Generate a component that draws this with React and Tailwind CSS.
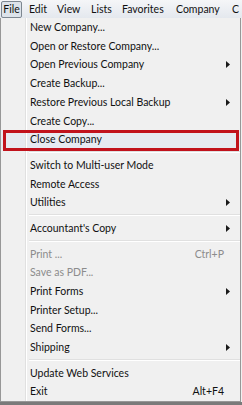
import React from 'react';

// menu bar entries after "File": [label, width of the slot]
const menus = [
  ['Edit', 'w-[28px]'],
  ['View', 'w-[34px]'],
  ['Lists', 'w-[31px]'],
  ['Favorites', 'w-[54px]'],
  ['Company', 'w-[56px]'],
  ['C', 'w-[10px]'],
];

// items of the File menu, 'sep' = separator line
const items = [
  { label: 'New Company...' },
  { label: 'Open or Restore Company...' },
  { label: 'Open Previous Company', sub: true },
  { label: 'Create Backup...' },
  { label: 'Restore Previous Local Backup', sub: true },
  { label: 'Create Copy...' },
  { label: 'Close Company', marked: true },
  'sep',
  { label: 'Switch to Multi-user Mode' },
  { label: 'Remote Access' },
  { label: 'Utilities', sub: true },
  'sep',
  { label: "Accountant's Copy", sub: true },
  'sep',
  { label: 'Print ...', key: 'Ctrl+P', disabled: true },
  { label: 'Save as PDF...', disabled: true },
  { label: 'Print Forms', sub: true },
  { label: 'Printer Setup...' },
  { label: 'Send Forms...' },
  { label: 'Shipping', sub: true },
  'sep',
  { label: 'Update Web Services' },
  { label: 'Exit', key: 'Alt+F4' },
];

const Arrow = () => (
  <svg width="4" height="7" viewBox="0 0 4 7" className="block">
    <path d="M0 0 L4 3.5 L0 7 Z" fill="#1a1a1a" />
  </svg>
);

const MenuRow = ({ item }) => (
  <div className={`relative flex h-[18.7px] items-center ${item.marked ? 'bg-[#e6eaf1]' : ''}`}>
    <div className="h-full w-[25px] shrink-0 border-r border-[#e0e0e0]" />
    <div className="h-full w-px shrink-0 bg-white" />
    <span className={`pl-[3px] flex-1 whitespace-nowrap ${item.disabled ? 'text-[#8c8c8c]' : 'text-[#111]'}`}>{item.label}</span>
    {item.key && (
      <span className={`pr-[16px] ${item.disabled ? 'text-[#8c8c8c]' : 'text-[#111]'}`}>{item.key}</span>
    )}
    {item.sub && (
      <span className="pr-[10px]">
        <Arrow />
      </span>
    )}
    {item.marked && (
      <div className="absolute left-[2px] right-[1px] top-0 -bottom-[2px] border-[3px] border-[#c1121c]" />
    )}
  </div>
);

const Separator = () => (
  <div className="flex h-[7px]">
    <div className="h-full w-[25px] shrink-0 border-r border-[#e0e0e0]" />
    <div className="h-full w-px shrink-0 bg-white" />
    <div className="flex-1 flex flex-col justify-center pl-[2px]">
      <div className="h-px bg-[#e0e0e0]" />
      <div className="h-px bg-white" />
    </div>
  </div>
);

export default function App() {
  return (
    <div className="relative h-[405px] w-[242px] overflow-hidden bg-[#f0f0f0] font-['Lato',sans-serif] text-[10.5px] leading-none">
      {/* menu bar */}
      <div className="flex h-[18px] items-center bg-gradient-to-b from-[#f5f6f8] to-[#e4e8ee] pl-px text-[#111]">
        <div className="flex h-[17px] w-[25px] items-center justify-center rounded-[2px] border border-[#7d8791] bg-[#dde3ea]">File</div>
        <div className="w-[7px] shrink-0" />
        {menus.map(([m, w]) => (
          <div key={m} className={`${w} shrink-0 whitespace-nowrap`}>{m}</div>
        ))}
      </div>

      {/* dropdown */}
      <div className="w-[241px] border border-t-0 border-[#979797] bg-[#f0f0f0]">
        {items.map((it, i) => (it === 'sep' ? <Separator key={i} /> : <MenuRow key={i} item={it} />))}
      </div>
      <div className="h-[3px] bg-[#7a7a7a]" />
    </div>
  );
}
